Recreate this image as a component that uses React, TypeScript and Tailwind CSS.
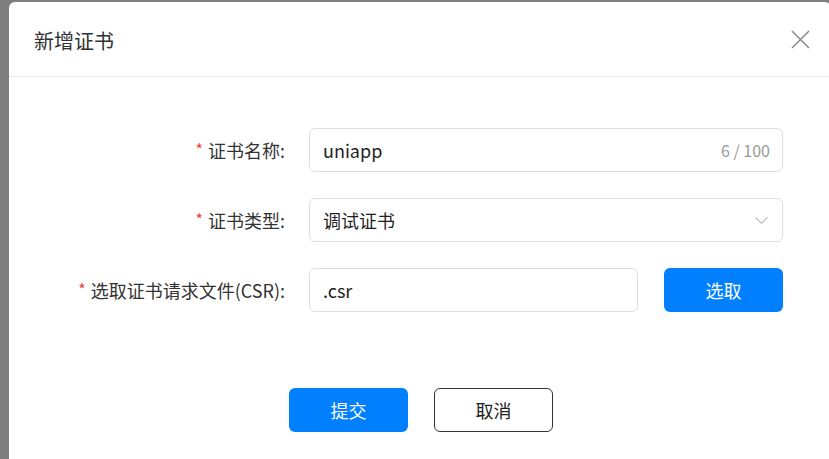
import React, { useState } from 'react';

const font = { fontFamily: '"Noto Sans CJK SC", "Noto Sans", sans-serif' };

const CloseIcon: React.FC = () => (
  <svg width="19" height="19" viewBox="0 0 19 19" fill="none">
    <path d="M1 1 L18 18 M18 1 L1 18" stroke="#8c8c8c" strokeWidth="1.6" />
  </svg>
);

const Chevron: React.FC = () => (
  <svg width="13" height="7" viewBox="0 0 13 7" fill="none">
    <path d="M0.5 0.5 L6.5 6.3 L12.5 0.5" stroke="#b5b8bf" strokeWidth="1.1" />
  </svg>
);

const Label: React.FC<{ text: string }> = ({ text }) => (
  <div className="w-[277px] shrink-0 flex items-center justify-end pr-[1px] text-[18px] text-[#333]">
    <span className="text-[#f23c3c] mr-[5px] text-[16px] relative -top-[1px]">*</span>
    <span>{text}</span>
  </div>
);

const App: React.FC = () => {
  const [name, setName] = useState('uniapp');

  return (
    <div className="w-[829px] h-[459px] bg-[#7f7f7f] overflow-hidden relative" style={font}>
      {/* Dialog */}
      <div className="absolute left-[9px] top-[2px] w-[822px] h-[470px] bg-white rounded-t-[6px] flex flex-col">
        <div className="h-[75px] flex items-center justify-between pl-[25px] pr-[21px] border-b border-[#e6e6e6]">
          <span className="text-[20px] text-[#303133] mt-[4px]">新增证书</span>
          <button className="w-[19px] h-[19px] flex items-center justify-center">
            <CloseIcon />
          </button>
        </div>

        <div className="pt-[51px] flex flex-col gap-[26px]">
          <div className="flex items-center h-[44px]">
            <Label text="证书名称:" />
            <div className="ml-[23px] w-[474px] h-[44px] border border-[#dcdfe6] rounded-[6px] flex items-center pl-[13px] pr-[12px]">
              <input
                value={name}
                onChange={(e) => setName(e.target.value)}
                className="flex-1 outline-none text-[18px] text-[#1f1f1f] bg-transparent"
                style={font}
              />
              <span className="text-[16px] text-[#9a9a9a]">{name.length} / 100</span>
            </div>
          </div>

          <div className="flex items-center h-[44px]">
            <Label text="证书类型:" />
            <div className="ml-[23px] w-[474px] h-[44px] border border-[#dcdfe6] rounded-[6px] flex items-center justify-between pl-[13px] pr-[14px]">
              <span className="text-[18px] text-[#1f1f1f]">调试证书</span>
              <Chevron />
            </div>
          </div>

          <div className="flex items-center h-[44px]">
            <Label text="选取证书请求文件(CSR):" />
            <div className="ml-[23px] w-[329px] h-[44px] border border-[#dcdfe6] rounded-[6px] flex items-center pl-[13px]">
              <span className="text-[18px] text-[#1f1f1f]">.csr</span>
            </div>
            <button className="ml-[26px] w-[119px] h-[44px] rounded-[6px] bg-[#0080ff] text-white text-[18px]">
              选取
            </button>
          </div>
        </div>

        <div className="mt-[76px] flex gap-[26px] pl-[280px]">
          <button className="w-[119px] h-[44px] rounded-[6px] bg-[#0080ff] text-white text-[18px]">提交</button>
          <button className="w-[119px] h-[44px] rounded-[6px] border border-[#333] bg-white text-[#222] text-[18px]">取消</button>
        </div>
      </div>
    </div>
  );
};

export default App;
